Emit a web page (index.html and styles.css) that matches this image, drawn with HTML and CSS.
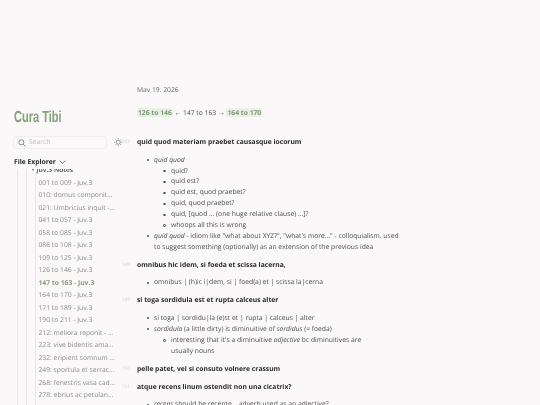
FILE: index.html
```html
<!DOCTYPE html>
<html lang="en">
<head>
<meta charset="utf-8">
<title>147 to 163 - Juv.3</title>
<link rel="stylesheet" href="styles.css">
</head>
<body>
<div class="page">
  <aside class="sidebar">
    <h2 class="title">Cura Tibi</h2>
    <div class="tools">
      <div class="search">
        <svg class="search-icon" viewBox="0 0 12 12" width="8" height="8"><circle cx="5" cy="5" r="3.8" fill="none" stroke="#555" stroke-width="1"/><path d="M7.8 7.8 11.2 11.2" stroke="#555" stroke-width="1" fill="none"/></svg>
        <span>Search</span>
      </div>
      <svg class="sun" viewBox="0 0 12 12" width="8.5" height="8.5"><circle cx="6" cy="6" r="2.8" fill="none" stroke="#444" stroke-width=".7"/><path d="M6 .3v1.8M6 9.9v1.8M.3 6h1.8M9.9 6h1.8M2 2l1.3 1.3M8.7 8.7 10 10M2 10l1.3-1.3M8.7 3.3 10 2" stroke="#444" stroke-width=".7" fill="none"/></svg>
    </div>
    <div class="explorer-head">
      <span>File Explorer</span>
      <svg viewBox="0 0 10 6" width="7" height="4"><path d="M1 1l4 4 4-4" fill="none" stroke="#2b2b2b" stroke-width="1"/></svg>
    </div>
    <div class="tree">
      <div class="tree-outer">
        <div class="tree-mid">
          <div class="folder"><span class="caret"></span>Juv.3 Notes</div>
          <ul class="files">
            <li>001 to 009 - Juv.3</li>
            <li>010: domus componit...</li>
            <li>021: Umbricius inquit -...</li>
            <li>041 to 057 - Juv.3</li>
            <li>058 to 085 - Juv.3</li>
            <li>086 to 108 - Juv.3</li>
            <li>109 to 125 - Juv.3</li>
            <li>126 to 146 - Juv.3</li>
            <li class="active">147 to 163 - Juv.3</li>
            <li>164 to 170 - Juv.3</li>
            <li>171 to 189 - Juv.3</li>
            <li>190 to 211 - Juv.3</li>
            <li>212: meliora reponit - ...</li>
            <li>223: vive bidentis ama...</li>
            <li>232: eripient somnum ...</li>
            <li>249: sportula et serrac...</li>
            <li>268: fenestris vasa cad...</li>
            <li>278: ebrius ac petulan...</li>
            <li>296: omnia Romae...</li>
          </ul>
        </div>
      </div>
    </div>
  </aside>
  <main class="content">
    <p class="date">May 19, 2026</p>
    <p class="nav"><a>126 to 146</a> ← 147 to 163 → <a>164 to 170</a></p>
    <p class="verse"><span class="ln">147</span>quid quod materiam praebet causasque iocorum</p>
    <ul class="list">
      <li><em>quid quod</em>
        <ul>
          <li>quid?</li>
          <li>quid est?</li>
          <li>quid est, quod praebet?</li>
          <li>quid, quod praebet?</li>
          <li>quid, [quod ... (one huge relative clause) ...]?</li>
          <li>whoops all this is wrong</li>
        </ul>
      </li>
      <li><em>quid quod</em> - idiom like "what about XYZ?", "what's more..." - colloquialism. used to suggest something (optionally) as an extension of the previous idea</li>
    </ul>
    <p class="verse"><span class="ln">148</span>omnibus hic idem, si foeda et scissa lacerna,</p>
    <ul class="list">
      <li>omnibus | (h)ic i|dem, si | foed(a) et | scissa la|cerna</li>
    </ul>
    <p class="verse"><span class="ln">149</span>si toga sordidula est et rupta calceus alter</p>
    <ul class="list">
      <li>si toga | sordidu|la (e)st et | rupta | calceus | alter</li>
      <li><em>sordidula</em> (a little dirty) is diminuitive of <em>sordidus</em> (= foeda)
        <ul>
          <li>interesting that it's a diminuitive <em>adjective</em> bc diminuitives are<br>usually nouns</li>
        </ul>
      </li>
    </ul>
    <p class="verse"><span class="ln">150</span>pelle patet, vel si consuto volnere crassum</p>
    <p class="verse"><span class="ln">151</span>atque recens linum ostendit non una cicatrix?</p>
    <ul class="list">
      <li><em>recens</em> should be recente... adverb used as an adjective?</li>
    </ul>
  </main>
</div>
</body>
</html>
```
FILE: styles.css
```css
html, body {
  margin: 0;
  height: 405px;
  overflow: hidden;
  background: #faf8f8;
}
body {
  font-family: "Open Sans", sans-serif;
  font-size: 6.75px;
  line-height: 10.9px;
  color: #4e4e4e;
  text-rendering: geometricPrecision;
}
.page {
  display: grid;
  grid-template-columns: 137px 265px;
  height: 405px;
  overflow: hidden;
  filter: blur(0.3px);
}
.sidebar {
  padding: 108.5px 0 0 14px;
  min-width: 0;
}
.title {
  margin: 0;
  font-family: "Liberation Sans", sans-serif;
  font-size: 16px;
  line-height: 18px;
  font-weight: 700;
  color: #84a07c;
  transform: scaleX(0.69);
  transform-origin: left center;
  white-space: nowrap;
}
.tools {
  display: flex;
  align-items: center;
  gap: 6.5px;
  margin: 9.5px 0 0 -1px;
}
.search {
  box-sizing: border-box;
  width: 94px;
  height: 13px;
  display: flex;
  align-items: center;
  gap: 3px;
  padding-left: 4px;
  border: 1px solid #efeded;
  border-radius: 3px;
  color: #bdbdbd;
}
.explorer-head {
  display: flex;
  align-items: center;
  gap: 3px;
  margin-top: 6.5px;
  height: 13px;
  font-weight: 700;
  color: #2b2b2b;
}
.tree {
  height: 238px;
  overflow: hidden;
  padding-left: 3px;
}
.tree-outer {
  border-left: 1px solid #e8e6e6;
  padding-left: 7.5px;
  margin-top: -4.5px;
  height: 260px;
}
.tree-mid {
  border-left: 1px solid #e8e6e6;
  height: 260px;
}
.folder {
  display: flex;
  align-items: center;
  gap: 3px;
  font-weight: 600;
  color: #4e4e4e;
  height: 12.5px;
  padding-left: 5px;
}
.caret {
  width: 0;
  height: 0;
  border-left: 1.5px solid transparent;
  border-right: 1.5px solid transparent;
  border-top: 2px solid #666;
}
.files {
  list-style: none;
  margin: 0 0 0 8px;
  padding: 0 0 0 3px;
  border-left: 1px solid #e8e6e6;
  color: #8d8d8d;
}
.files li {
  height: 12.5px;
  line-height: 12.5px;
  white-space: nowrap;
}
.files .active {
  color: #84a07c;
  font-weight: 700;
}
.content {
  min-width: 0;
}
.date {
  margin: 87px 0 0;
  height: 5px;
  line-height: 5px;
  overflow: hidden;
  color: #6a6a6a;
}
.nav {
  margin: 16px 0 0;
}
.nav a {
  background: #e9f0e6;
  color: #7a9b72;
  font-weight: 700;
  padding: 0 1px;
  border-radius: 2px;
}
.verse {
  position: relative;
  margin: 7px 0 0;
  font-weight: 700;
  color: #2b2b2b;
}
.nav + .verse {
  margin-top: 18px;
}
.ln {
  position: absolute;
  left: -15.5px;
  top: 0;
  font-weight: 400;
  font-size: 5px;
  color: #d2d0d0;
}
.list,
.list ul {
  list-style: none;
  padding-left: 17px;
}
.list {
  margin: 6.8px 0 0;
}
.list ul {
  margin: 0;
}
.list li {
  position: relative;
}
.list li::before {
  content: "";
  position: absolute;
  left: -7.5px;
  top: 4.4px;
  width: 2px;
  height: 2px;
  border-radius: 50%;
  background: #4e4e4e;
}
.list ul li::before {
  box-sizing: border-box;
  left: -7.8px;
  width: 2.4px;
  height: 2.4px;
  background: none;
  border: 0.5px solid #4e4e4e;
}
```
